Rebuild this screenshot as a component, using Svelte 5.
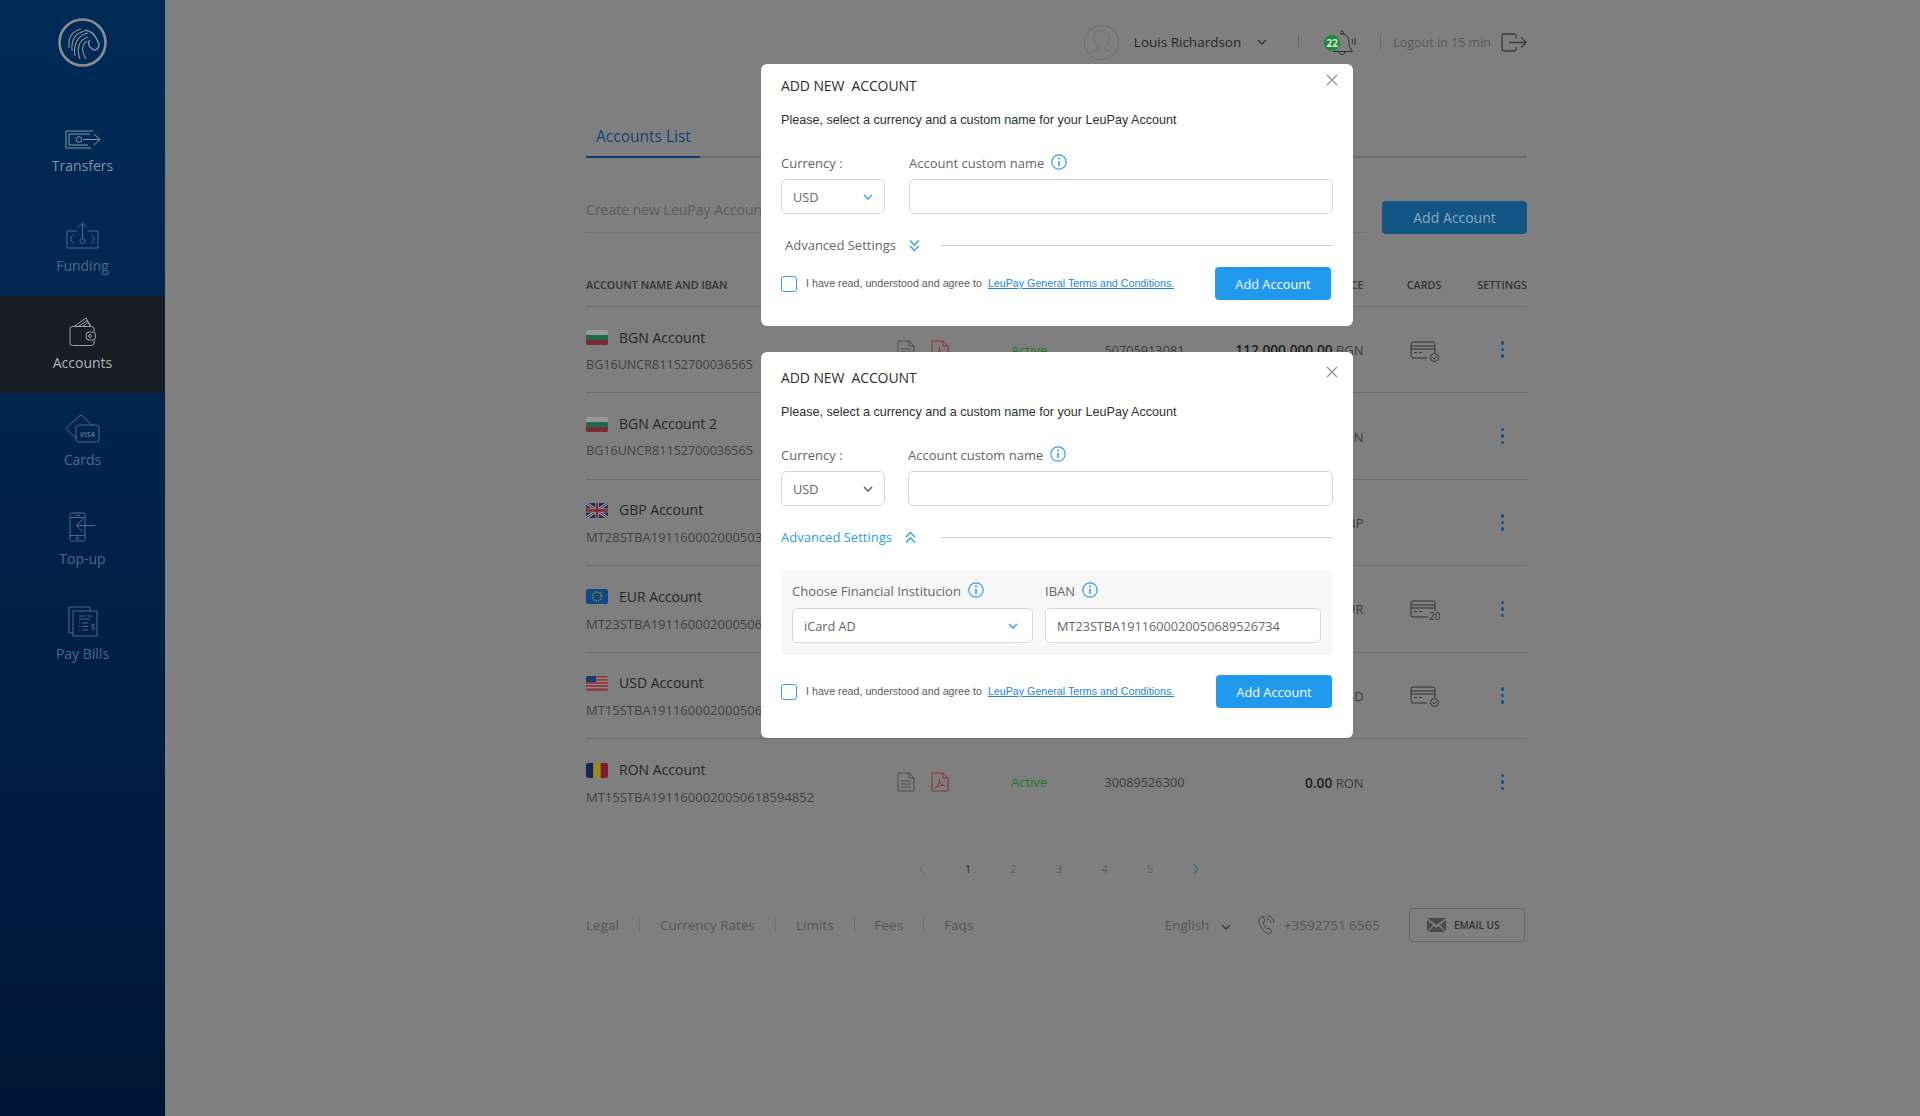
<script>
  const nav = [
    { id: "transfers", label: "Transfers", cls: "mid" },
    { id: "funding", label: "Funding", cls: "dim" },
    { id: "accounts", label: "Accounts", cls: "active" },
    { id: "cards", label: "Cards", cls: "dim" },
    { id: "topup", label: "Top-up", cls: "dim" },
    { id: "bills", label: "Pay Bills", cls: "dim" }
  ];

  // rows 2-5 sit behind the dialogs, so only their visible parts are filled in
  const rows = [
    { flag: "bg", name: "BGN Account", iban: "BG16UNCR81152700036565", no: "50705913081", amount: "112.000.000.00", cur: "BGN", card: "check", docs: true },
    { flag: "bg", name: "BGN Account 2", iban: "BG16UNCR81152700036565", cur: "BGN" },
    { flag: "gb", name: "GBP Account", iban: "MT28STBA1911600020005038", cur: "GBP" },
    { flag: "eu", name: "EUR Account", iban: "MT23STBA1911600020005068", cur: "EUR", card: "count" },
    { flag: "us", name: "USD Account", iban: "MT15STBA1911600020005061", cur: "USD", card: "check" },
    { flag: "ro", name: "RON Account", iban: "MT15STBA1911600020050618594852", no: "30089526300", amount: "0.00", cur: "RON", docs: true }
  ];

  const links = ["Legal", "Currency Rates", "Limits", "Fees", "Faqs"];
</script>

{#snippet info()}
  <svg class="info" width="16" height="16" viewBox="0 0 16 16" fill="none" stroke="currentColor">
    <circle cx="8" cy="8" r="7.2" stroke-width="1.2" />
    <path d="M8 7v5" stroke-width="1.6" />
    <circle cx="8" cy="4.6" r="1" fill="currentColor" stroke="none" />
  </svg>
{/snippet}

{#snippet chevron(color)}
  <svg class="chev" style="color:{color}" width="10" height="6" viewBox="0 0 10 6" fill="none" stroke="currentColor" stroke-width="1.3">
    <path d="M1 1l4 4 4-4" />
  </svg>
{/snippet}

{#snippet addForm(expanded)}
  <section class="modal" class:expanded>
    <svg class="close" width="12" height="12" viewBox="0 0 12 12" stroke="#8a8a8a" stroke-width="1.1">
      <path d="M1 1l10 10M11 1L1 11" />
    </svg>
    <h2>ADD NEW&nbsp; ACCOUNT</h2>
    <p class="sub">Please, select a currency and a custom name for your LeuPay Account</p>

    <div class="fields">
      <div class="field currency">
        <span class="lbl">Currency :</span>
        <div class="control select">USD {@render chevron(expanded ? "#555" : "#2aa0f0")}</div>
      </div>
      <div class="field grow">
        <span class="lbl">Account custom name {@render info()}</span>
        <div class="control"></div>
      </div>
    </div>

    <div class="advanced">
      <span class="adv-text">Advanced Settings</span>
      <svg class="adv-icon" width="11" height="13" viewBox="0 0 11 13" fill="none" stroke="#2aa0f0" stroke-width="1.4">
        {#if expanded}
          <path d="M1 6l4.5-4.5L10 6M1 11.5L5.5 7l4.5 4.5" />
        {:else}
          <path d="M1 1.5L5.5 6 10 1.5M1 7l4.500 4.500L10 7" />
        {/if}
      </svg>
      <i class="adv-line"></i>
    </div>

    {#if expanded}
      <div class="panel">
        <div class="field fin">
          <span class="lbl">Choose Financial Institucion {@render info()}</span>
          <div class="control select">iCard AD {@render chevron("#2aa0f0")}</div>
        </div>
        <div class="field grow">
          <span class="lbl">IBAN {@render info()}</span>
          <div class="control">MT23STBA1911600020050689526734</div>
        </div>
      </div>
    {/if}

    <div class="terms">
      <span class="check"></span>
      <span class="terms-text">I have read, understood and agree to</span>
      <a href="#terms">LeuPay General Terms and Conditions.</a>
      <button>Add Account</button>
    </div>
  </section>
{/snippet}

{#snippet flag(code)}
  <svg class="flag" width="22" height="15" viewBox="0 0 22 15">
    <defs><clipPath id="fc-{code}"><rect width="22" height="15" rx="2" /></clipPath></defs>
    <g clip-path="url(#fc-{code})">
      {#if code === "bg"}
        <rect width="22" height="5" fill="#989898" /><rect y="5" width="22" height="5" fill="#1f6a50" /><rect y="10" width="22" height="5" fill="#7c2a36" />
      {:else if code === "gb"}
        <rect width="22" height="15" fill="#1c2f5c" />
        <path d="M0 0l22 15M22 0L0 15" stroke="#979797" stroke-width="3" />
        <path d="M0 0l22 15M22 0L0 15" stroke="#7c2a36" stroke-width="1" />
        <path d="M11 0v15M0 7.500h22" stroke="#979797" stroke-width="4" />
        <path d="M11 0v15M0 7.500h22" stroke="#7c2a36" stroke-width="2.500" />
      {:else if code === "eu"}
        <rect width="22" height="15" fill="#0f4a86" />
        <circle cx="11" cy="7.500" r="4.500" fill="none" stroke="#a58f1c" stroke-width="1.400" stroke-dasharray="1.300 1.050" />
      {:else if code === "us"}
        <rect width="22" height="15" fill="#8c4046" />
        <path d="M0 2.300h22M0 5.400h22M0 8.500h22M0 11.600h22" stroke="#948a8a" stroke-width="1.200" />
        <rect width="10" height="6" fill="#1c3a72" />
      {:else}
        <rect width="7.400" height="15" fill="#10285a" /><rect x="7.400" width="7.300" height="15" fill="#a08a14" /><rect x="14.700" width="7.300" height="15" fill="#7e1c2c" />
      {/if}
    </g>
  </svg>
{/snippet}

{#snippet navIcon(id)}
  {#if id === "transfers"}
    <svg width="36" height="19" viewBox="0 0 36 19" fill="none" stroke="currentColor">
      <path d="M28 1H1v17h25" /><path d="M25 4H4v11h19" /><circle cx="14" cy="9.500" r="2.800" /><path d="M18 9.500h17M29 4l6 5.500L29 15" />
    </svg>
  {:else if id === "funding"}
    <svg width="33" height="27" viewBox="0 0 33 27" fill="none" stroke="currentColor">
      <path d="M11 9H1v17h31V9H22" /><path d="M16.500 17V1M12 5.500L16.500 1 21 5.500" /><circle cx="16.500" cy="19" r="2.600" /><path d="M8 13c-2 0-3 1.500-3 4s1 4 3 4M25 13c2 0 3 1.500 3 4s-1 4-3 4" />
    </svg>
  {:else if id === "accounts"}
    <svg width="27" height="29" viewBox="0 0 27 29" fill="none" stroke="currentColor">
      <path d="M5 9.500L17 1l5 8.500M9.500 9.500L18 3.500l3.500 6M13.500 9.500l5-3.500" />
      <path d="M25 15v-3a2.500 2.500 0 0 0-2.500-2.500H3.500A2.500 2.500 0 0 0 1 12v14a2.500 2.500 0 0 0 2.500 2.500h19A2.500 2.500 0 0 0 25 26v-3" />
      <rect x="17" y="15" width="9.500" height="8" rx="3" />
      <circle cx="21" cy="19" r="1.400" />
    </svg>
  {:else if id === "cards"}
    <svg width="35" height="29" viewBox="0 0 35 29" fill="none" stroke="currentColor">
      <path d="M12 25L1.500 15.500a1.500 1.500 0 0 1 0-2L15 1.500a1.500 1.500 0 0 1 2 0L27 11" />
      <rect x="11" y="11" width="23" height="17" rx="3" />
      <text class="visa" x="22.500" y="23" text-anchor="middle">VISA</text>
    </svg>
  {:else if id === "topup"}
    <svg width="27" height="30" viewBox="0 0 27 30" fill="none" stroke="currentColor">
      <rect x="1" y="1" width="15" height="28" rx="1.500" /><path d="M1 5.500h15M1 23.500h15M6 3.300h5" /><circle cx="8.500" cy="26.300" r="1.300" />
      <path d="M26 13.500H8M14 7l-6.500 6.500L14 20" fill="#00234d" />
    </svg>
  {:else}
    <svg width="30" height="31" viewBox="0 0 30 31" fill="none" stroke="currentColor">
      <path d="M5 27H1V1h21v4" /><rect x="5" y="5" width="24" height="25" fill="none" />
      <path d="M11 10h6M19 10h5M11 13h11M11 17h1M14 17h6M11 20.500h1M14 20.500h6M11 24h1M14 24h6" />
      <text class="dollar" x="25" y="24" text-anchor="middle">$</text>
    </svg>
  {/if}
{/snippet}

{#snippet cardIcon(kind)}
  <svg class="card-icon" width="30" height="22" viewBox="0 0 30 22" fill="none" stroke="#333" stroke-width="1">
    {#if kind === "check"}
      <path d="M17 17H3a2 2 0 0 1-2-2V3a2 2 0 0 1 2-2h20a2 2 0 0 1 2 2v9" />
      <path d="M1 5h24M1 8h24M4 11.500h3M9 11.500h3" />
      <circle cx="24.500" cy="16.500" r="4" /><path d="M22.600 16.500l1.500 1.500 2.400-2.700" />
    {:else}
      <path d="M18 17H3a2 2 0 0 1-2-2V3a2 2 0 0 1 2-2h20a2 2 0 0 1 2 2v8" />
      <path d="M1 5h24M1 8h24M4 11.500h3M9 11.500h3" />
      <text class="card-count" x="19" y="20">20</text>
    {/if}
  </svg>
{/snippet}

<div class="page">
  <aside class="sidebar">
    <div class="logo">
      <svg width="49" height="49" viewBox="0 0 49 49" fill="none" stroke="#8a8c8e">
        <circle cx="24.500" cy="24.500" r="23" stroke-width="2.600" />
        <g stroke-width="1.100" stroke="#8f9498">
          <path d="M11 30C10 20 14 13 23 11" />
          <path d="M14 33C13 22 17 15 27 13" />
          <path d="M17 38C15 26 20 17 30 15" />
          <path d="M22 41C18 30 21 22 30 19" />
          <path d="M28 41C23 33 24 26 29 23" />
          <path d="M27 12C33 13 37 17 39 22L41 26C41 30 39 32 36 32L33 30C30 28 30 24 32 22" stroke-width="1.400" />
        </g>
      </svg>
    </div>
    <nav>
      {#each nav as item}
        <div class="nav-item {item.cls}">
          <span class="nav-icon">{@render navIcon(item.id)}</span>
          <span class="nav-label">{item.label}</span>
        </div>
      {/each}
    </nav>
  </aside>

  <main>
    <header>
      <svg class="avatar" width="37" height="37" viewBox="0 0 40 40" fill="none" stroke="#707070">
        <circle cx="20" cy="20" r="18.500" stroke-width="1.200" />
        <path d="M7 32c3-3 9-3 10-6-4-4-6-8-5-13 1-4 4-6 8-6s7 2 8 6c1 5-1 9-5 13 1 3 7 3 10 6" />
      </svg>
      <span class="user">Louis Richardson</span>
      {@render chevron("#333")}
      <i class="hsep first"></i>
      <span class="bell">
        <b>22</b>
        <svg width="24" height="26" viewBox="0 0 24 26" fill="none" stroke="#2e2e2e">
          <path d="M10 4c5 0 7 4 7 9 0 4 2 6 3.500 8.500H1" /><circle cx="10" cy="2.500" r="1.500" /><path d="M7 22c0 3.500 6 3.500 6 0M20 9c1 1.500 1 3.500 0 5M22.500 8c1 2 1 5 0 7" />
        </svg>
      </span>
      <i class="hsep"></i>
      <span class="logout">Logout in 15 min</span>
      <svg width="26" height="19" viewBox="0 0 26 19" fill="none" stroke="#3c3c3c" stroke-width="1.300">
        <path d="M13 1H3a2 2 0 0 0-2 2v13a2 2 0 0 0 2 2h10a2 2 0 0 0 2-2v-2M15 5V3a2 2 0 0 0-2-2" /><path d="M8 9.500h17M20 4.500l5 5-5 5" />
      </svg>
    </header>

    <div class="tabs"><span class="tab">Accounts List</span></div>

    <div class="create">
      <span class="create-text">Create new LeuPay Account</span>
      <button>Add Account</button>
    </div>

    <div class="row head">
      <span>ACCOUNT NAME AND IBAN</span>
      <span></span>
      <span></span>
      <span></span>
      <span class="bal">BALANCE</span>
      <span class="cards">CARDS</span>
      <span class="set">SETTINGS</span>
    </div>

    {#each rows as r}
      <div class="row item">
        <div class="acct">
          <div class="acct-name">{@render flag(r.flag)}<span>{r.name}</span></div>
          <div class="iban" class:short={r.flag === "bg"}>{r.iban}</div>
        </div>
        <div class="docs">
          {#if r.docs}
            <svg width="18" height="20" viewBox="0 0 18 20" fill="none" stroke="#4c4c4c">
              <path d="M1 1h11l5 5v13H1zM12 1v5h5" /><path d="M4 9h10M4 12h10M4 15h10" />
            </svg>
            <svg width="18" height="20" viewBox="0 0 18 20" fill="none" stroke="#8a3236">
              <path d="M1 1h11l5 5v13H1zM12 1v5h5" /><path d="M4 16c3-2 5-6 4.500-9-1 3 1 6 5 6.500-3-.500-6 .500-9.500 2.500z" />
            </svg>
          {/if}
        </div>
        <span class="status">{r.docs ? "Active" : ""}</span>
        <span class="no">{r.no ?? ""}</span>
        <span class="bal"><b>{r.amount ?? ""}</b> {r.cur}</span>
        <span class="cards">{#if r.card}{@render cardIcon(r.card)}{/if}</span>
        <span class="kebab"><i></i><i></i><i></i></span>
      </div>
    {/each}

    <div class="pager">
      <span class="arrow">
        <svg width="6" height="10" viewBox="0 0 6 10" fill="none" stroke="#6a6a6a"><path d="M5 .5L1 5l4 4.500" /></svg>
      </span>
      <span class="cur">1</span><span>2</span><span>3</span><span>4</span><span>5</span>
      <span class="arrow">
        <svg width="6" height="10" viewBox="0 0 6 10" fill="none" stroke="#10568c"><path d="M1 .5L5 5 1 9.500" /></svg>
      </span>
    </div>

    <footer>
      <div class="links">
        {#each links as l}<span class="link">{l}</span>{/each}
      </div>
      <div class="foot-right">
        <span class="lang">English {@render chevron("#333")}</span>
        <svg width="18" height="20" viewBox="0 0 18 20" fill="none" stroke="#454545">
          <path d="M6 1L3 3c-2 2-1 6 1 9s5 7 8 7l3-2-3-4-2 1c-2-1-3-4-4-6l2-2z" /><path d="M10 4c2 0 4 2 4 4M10 1c4 0 7 3 7 7" />
        </svg>
        <span class="phone">+3592751 6565</span>
        <div class="email">
          <svg width="19" height="14" viewBox="0 0 19 14"><path d="M0 0h19L9.500 7z M0 2l6 5-6 6z M19 2l-6 5 6 6z M1 14l6-6 2.500 2L12 8l6 6z" fill="#4a4a4a" /></svg>
          EMAIL US
        </div>
      </div>
    </footer>
  </main>

  <div class="modals">
    {@render addForm(false)}
    {@render addForm(true)}
  </div>
</div>

<style>
  :global(body) {
    margin: 0;
    font-family: "Open Sans", sans-serif;
    background: #7f7f7f;
  }

  .page {
    display: flex;
    position: relative;
    min-height: 1116px;
    background: #7f7f7f;
    color: #333;
    overflow: hidden;
  }

  /* sidebar */
  .sidebar {
    width: 165px;
    flex: none;
    background: linear-gradient(#002b57 0%, #00264f 30%, #001d44 65%, #001534 100%);
  }
  .logo {
    height: 98px;
    box-sizing: border-box;
    padding-top: 18px;
    display: flex;
    justify-content: center;
  }
  nav { margin-top: 1px; }
  .nav-item {
    height: 97px;
    box-sizing: border-box;
    padding-top: 20px;
    display: flex;
    flex-direction: column;
    align-items: center;
    font-size: 14px;
  }
  .nav-item:first-child { margin-bottom: 3px; }
  .nav-item:nth-child(5) { padding-top: 22px; }
  .nav-icon {
    height: 30px;
    display: flex;
    align-items: flex-end;
  }
  .nav-icon svg { display: block; }
  .nav-label {
    margin-top: 7px;
    line-height: 20px;
  }
  .mid { color: #8495a8; }
  .dim { color: #4d6a8a; }
  .active { background: #171d24; color: #b4b6b8; }
  .active .nav-icon { color: #a0a2a4; }
  .visa { font: italic 700 7.5px "Open Sans", sans-serif; fill: currentColor; stroke: none; }
  .dollar { font: 9px "Open Sans", sans-serif; fill: currentColor; stroke: none; }

  /* main column */
  main {
    width: 941px;
    margin-left: 421px;
    flex: none;
  }
  header {
    height: 84px;
    display: flex;
    align-items: center;
    justify-content: flex-end;
    font-size: 13.5px;
  }
  .avatar { margin-right: 14px; }
  .user { color: #262626; margin-right: 16px; }
  .hsep {
    width: 1px;
    height: 14px;
    background: #666;
    margin: 0 12px;
  }
  .hsep.first { margin: 0 25px 0 31px; }
  .bell {
    position: relative;
    width: 32px;
    height: 26px;
    margin: 1px 12px 0 0;
    display: flex;
    justify-content: flex-end;
  }
  .bell b {
    position: absolute;
    left: 0;
    top: 5px;
    width: 16px;
    height: 16px;
    line-height: 16px;
    border-radius: 50%;
    background: #1f8a3c;
    color: #d8e8dc;
    font-size: 10px;
    font-weight: 700;
    text-align: center;
  }
  .logout { color: #585858; font-size: 12.5px; margin-right: 10px; }

  .tabs {
    height: 72px;
    display: flex;
    align-items: flex-end;
    border-bottom: 2px solid #6a6a6a;
  }
  .tab {
    color: #0f3f78;
    font-size: 15.5px;
    line-height: 22px;
    padding: 0 9px 9px 10px;
    margin-bottom: -2px;
    border-bottom: 2px solid #0f3f78;
  }

  .create {
    margin-top: 43px;
    display: flex;
    align-items: flex-start;
    justify-content: space-between;
    height: 33px;
  }
  .create-text {
    width: 780px;
    height: 31px;
    color: #5c5c5c;
    font-size: 14px;
    line-height: 18px;
    border-bottom: 1px dotted #6a6a6a;
  }
  .create button {
    width: 145px;
    height: 33px;
    background: #125584;
    color: #8ea9bf;
    border: 0;
    border-radius: 4px;
    font: 14px "Open Sans", sans-serif;
  }

  .row {
    display: grid;
    grid-template-columns: 311px 114px 93.6px 130px 129px 121px 42.4px;
    align-items: center;
    border-bottom: 1px solid #6c6c6c;
    box-sizing: border-box;
  }
  .head {
    height: 73px;
    padding-top: 29px;
    font-size: 10.8px;
    font-weight: 600;
    color: #333;
  }
  .head span { white-space: nowrap; }
  .head .set { justify-self: end; }
  .item { height: 86.4px; font-size: 13px; }
  .item:nth-last-child(3) { border-bottom: 0; }
  .bal { text-align: right; color: #3c3c3c; white-space: nowrap; }
  .bal b { font-size: 13.7px; font-weight: 600; color: #1e1e1e; }
  .cards { text-align: center; }
  .card-icon { display: inline-block; vertical-align: middle; margin: 4px 0 0 1px; }
  .card-count { font-size: 10px; fill: #333; stroke: none; font-family: "Open Sans", sans-serif; }

  .acct-name {
    display: flex;
    align-items: center;
    gap: 11px;
    font-size: 14px;
    color: #262626;
    line-height: 20px;
    margin-top: 3px;
  }
  .iban {
    margin-top: 7px;
    line-height: 20px;
    color: #3f3f3f;
    white-space: nowrap;
  }
  .iban.short { font-size: 12.6px; }
  .docs { display: flex; gap: 16px; }
  .status { color: #1d7a2c; }
  .no { color: #3a3a3a; font-size: 12.7px; }
  .kebab {
    display: flex;
    flex-direction: column;
    align-items: center;
    gap: 3px;
    width: 36px;
  }
  .kebab i {
    width: 3.5px;
    height: 3.5px;
    border-radius: 50%;
    background: #10568c;
  }

  .pager {
    display: flex;
    justify-content: center;
    margin: 33px 0 0 5px;
    font-size: 11px;
    color: #5c5c5c;
    line-height: 22px;
  }
  .pager span { width: 45.6px; text-align: center; }
  .pager .cur { color: #262626; }
  .pager .arrow { display: flex; align-items: center; justify-content: center; }

  footer {
    margin-top: 28px;
    height: 34px;
    width: 939px;
    display: flex;
    align-items: center;
    justify-content: space-between;
    font-size: 13.5px;
    color: #555;
  }
  .links { display: flex; }
  .link { padding: 0 20px; border-left: 1px solid #707070; line-height: 14px; }
  .link:first-child { padding-left: 0; border: 0; }
  .foot-right { display: flex; align-items: center; }
  .lang { margin-right: 26px; }
  .lang .chev { margin-left: 8px; }
  .phone { margin: 0 29px 0 9px; }
  .email {
    width: 116px;
    height: 34px;
    box-sizing: border-box;
    border: 1px solid #666;
    border-radius: 4px;
    display: flex;
    align-items: center;
    padding-left: 17px;
    gap: 8px;
    font-size: 10px;
    font-weight: 600;
    color: #333;
  }

  /* dialogs */
  .modals {
    position: absolute;
    top: 64px;
    left: 761px;
    display: flex;
    flex-direction: column;
    gap: 26px;
  }
  .modal {
    position: relative;
    width: 592px;
    box-sizing: border-box;
    padding: 12px 20px 25px;
    background: #fff;
    border-radius: 6px;
    height: 262px;
  }
  .modal.expanded { padding-top: 16px; padding-bottom: 29px; height: 386px; }
  .close { position: absolute; top: 10px; right: 15px; }
  .expanded .close { top: 14px; }
  h2 {
    margin: 0;
    font-size: 14px;
    font-weight: 400;
    line-height: 20px;
    color: #2e2e2e;
    letter-spacing: -0.1px;
  }
  .sub {
    margin: 14px 0 0;
    font: 12.6px/20px "Liberation Sans", Arial, sans-serif;
    color: #303030;
  }
  .fields {
    display: flex;
    gap: 24px;
    margin-top: 23px;
  }
  .expanded .fields { gap: 23px; }
  .field { display: flex; flex-direction: column; gap: 6px; }
  .currency { width: 104px; }
  .grow { flex: 1; }
  .lbl {
    display: flex;
    align-items: center;
    gap: 7px;
    font-size: 13px;
    line-height: 20px;
    color: #666;
  }
  .info { color: #2aa0f0; margin-top: -2px; }
  .control {
    height: 35px;
    box-sizing: border-box;
    border: 1px solid #d8d8d8;
    border-radius: 5px;
    background: #fff;
    padding: 0 11px;
    display: flex;
    align-items: center;
    justify-content: space-between;
    font-size: 12.7px;
    color: #666;
  }
  .advanced {
    margin-top: 21px;
    display: flex;
    align-items: center;
    height: 20px;
    padding-left: 4px;
    font-size: 13px;
    color: #666;
  }
  .expanded .advanced { padding-left: 0; color: #2aa0f0; }
  .adv-icon { margin-left: 13px; }
  .adv-line {
    margin-left: auto;
    width: 392px;
    height: 1px;
    background: #cfcfcf;
  }
  .panel {
    margin-top: 23px;
    height: 85px;
    box-sizing: border-box;
    padding: 11px 12px 0 11px;
    background: #f7f7f7;
    border-radius: 6px;
    display: flex;
    gap: 12px;
  }
  .panel .field { gap: 7px; }
  .fin { width: 241px; }
  .fin .control { padding-right: 14px; }
  .terms {
    margin-top: 12px;
    display: flex;
    align-items: center;
    height: 33px;
    font: 10.7px "Liberation Sans", Arial, sans-serif;
    color: #5c5c5c;
  }
  .expanded .terms { margin-top: 20px; }
  .check {
    width: 16px;
    height: 16px;
    box-sizing: border-box;
    border: 1.5px solid #2aa0f0;
    border-radius: 3px;
    margin-right: 9px;
  }
  .terms-text { margin-top: -1px; }
  .terms a {
    margin: -1px 0 0 6px;
    color: #1d86d8;
    text-decoration: underline;
  }
  .terms button {
    margin-left: auto;
    margin-right: 2px;
    width: 116px;
    height: 33px;
    border: 0;
    border-radius: 4px;
    background: #2199ec;
    color: #fff;
    font: 12.8px "Open Sans", sans-serif;
  }
  .expanded .terms button { margin-right: 1px; }
</style>
